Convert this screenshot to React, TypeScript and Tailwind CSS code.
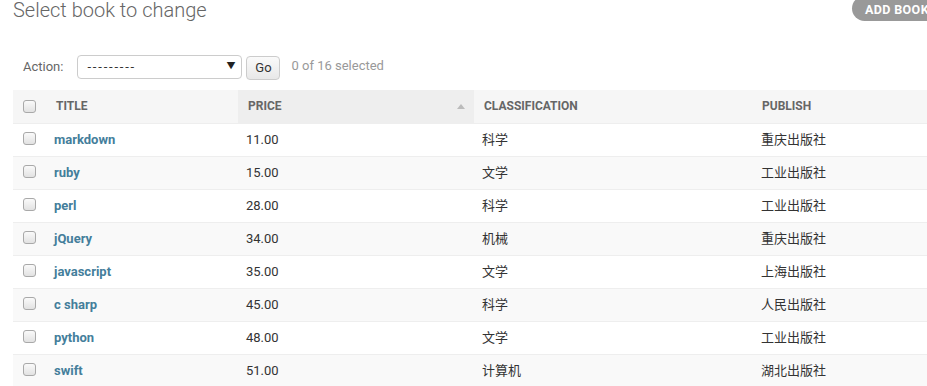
import React from 'react';

const books = [
  { title: 'markdown', price: '11.00', cls: '科学', pub: '重庆出版社' },
  { title: 'ruby', price: '15.00', cls: '文学', pub: '工业出版社' },
  { title: 'perl', price: '28.00', cls: '科学', pub: '工业出版社' },
  { title: 'jQuery', price: '34.00', cls: '机械', pub: '重庆出版社' },
  { title: 'javascript', price: '35.00', cls: '文学', pub: '上海出版社' },
  { title: 'c sharp', price: '45.00', cls: '科学', pub: '人民出版社' },
  { title: 'python', price: '48.00', cls: '文学', pub: '工业出版社' },
  { title: 'swift', price: '51.00', cls: '计算机', pub: '湖北出版社' },
];

function Check() {
  return (
    <input
      type="checkbox"
      className="appearance-none block w-[13px] h-[13px] border border-[#a9a9a9] rounded-[3px] bg-gradient-to-b from-[#fafafa] to-[#e2e2e2] m-0"
    />
  );
}

export default function App() {
  return (
    <div
      className="w-[927px] h-[386px] overflow-hidden bg-white text-[#333]"
      style={{ fontFamily: 'Roboto, "Noto Sans CJK SC", sans-serif' }}
    >
      <div className="flex items-start justify-between pl-[13px]">
        <h1 className="text-[20px] font-light text-[#666] leading-[22px] -mt-[1px]">Select book to change</h1>
        <a className="-mt-[4px] -mr-[14px] h-[25px] flex items-center pt-[4px] pl-[13px] pr-[12px] rounded-[13px] bg-[#999] text-white text-[12.5px] font-bold tracking-[0.4px] uppercase whitespace-nowrap">
          Add book
        </a>
      </div>

      <div className="flex items-center pl-[23px] mt-[34px] h-[24px] text-[13px]">
        <span className="text-[#666]">Action:</span>
        <div className="ml-[14px] w-[165px] h-[24px] border border-[#ccc] rounded-[4px] flex items-center justify-between pl-[9px] pr-[6px]">
          <span className="text-[#333] tracking-[1.8px]">---------</span>
          <span className="text-[9px] text-[#222]">▼</span>
        </div>
        <button className="ml-[4px] w-[34px] h-[24px] mt-[1px] border border-[#ccc] rounded-[4px] bg-gradient-to-b from-[#fafafa] to-[#e8e8e8] text-[13px] text-[#333]">
          Go
        </button>
        <span className="ml-[11px] text-[#999] -mt-[2px]">0 of 16 selected</span>
      </div>

      <table className="ml-[13px] mt-[11px] w-[930px] table-fixed border-collapse">
        <colgroup>
          <col className="w-[33px]" />
          <col className="w-[192px]" />
          <col className="w-[236px]" />
          <col className="w-[280px]" />
          <col />
        </colgroup>
        <thead>
          <tr className="h-[33px] bg-[#f6f6f6] border-b border-[#eee] text-[12px] font-semibold uppercase text-[#666]">
            <th className="pl-[10px] text-left align-middle">
              <Check />
            </th>
            <th className="pl-[10px] text-left">Title</th>
            <th className="pl-[10px] pr-[9px] text-left bg-[#eee]">
              <div className="flex items-center justify-between">
                <span>Price</span>
                <span className="w-0 h-0 border-l-[4px] border-r-[4px] border-b-[5px] border-l-transparent border-r-transparent border-b-[#bbb]" />
              </div>
            </th>
            <th className="pl-[10px] text-left">Classification</th>
            <th className="pl-[8px] text-left">Publish</th>
          </tr>
        </thead>
        <tbody className="text-[13px]">
          {books.map((b, i) => (
            <tr
              key={'Book_Row__' + String(i)}
              className={'h-[33px] border-b border-[#eee] ' + (i % 2 === 1 ? 'bg-[#f9f9f9]' : 'bg-white')}
            >
              <td className="pl-[10px] align-middle">
                <div className="-mt-[3px]">
                  <Check />
                </div>
              </td>
              <td className="pl-[8px]">
                <a className="font-bold text-[#447e9b]">{b.title}</a>
              </td>
              <td className="pl-[8px]">{b.price}</td>
              <td className="pl-[8px]">{b.cls}</td>
              <td className="pl-[7px]">{b.pub}</td>
            </tr>
          ))}
        </tbody>
      </table>
    </div>
  );
}
